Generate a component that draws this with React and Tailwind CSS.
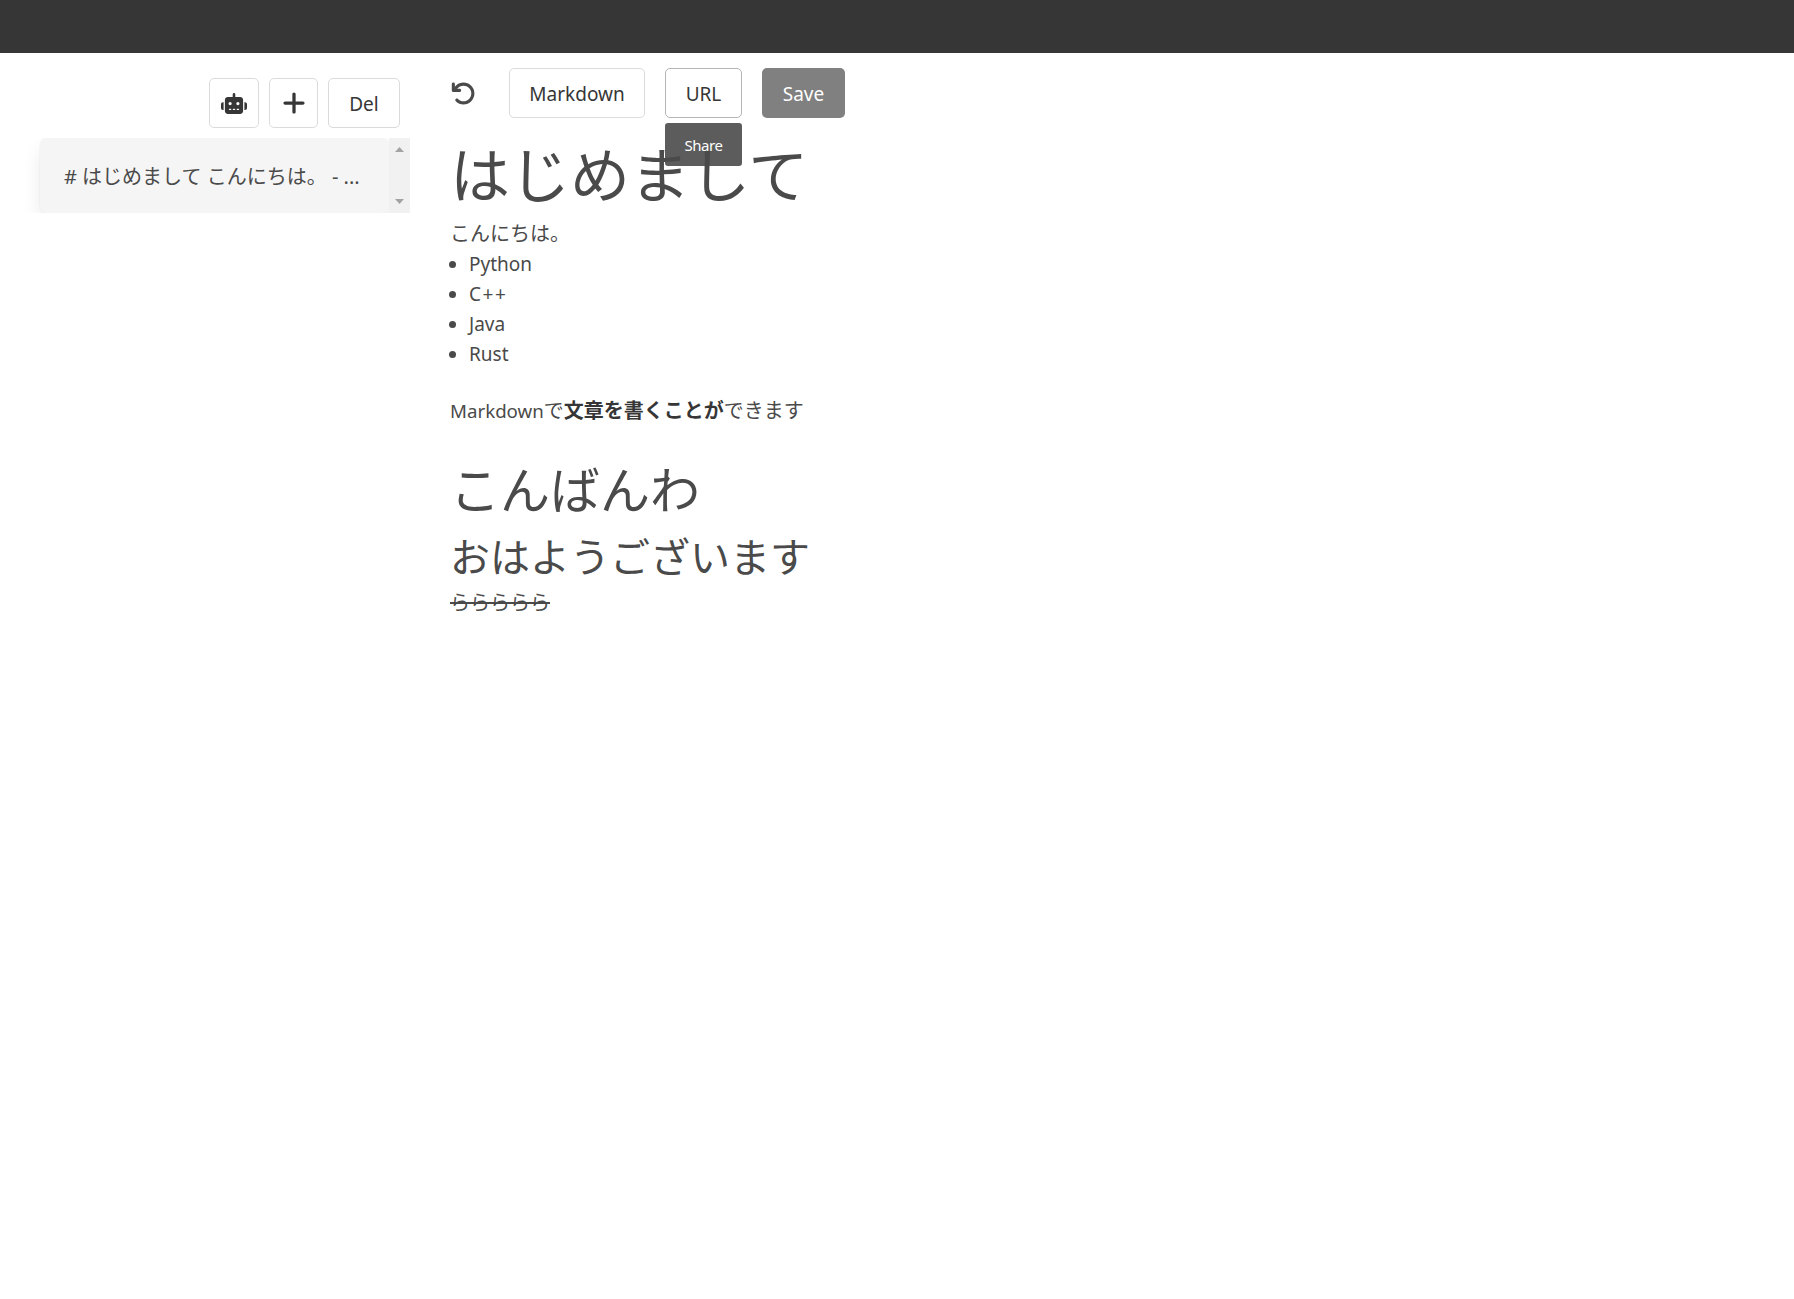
import React from 'react';
import { FaArrowRotateLeft, FaPlus, FaRobot } from 'react-icons/fa6';

const languages = ['Python', 'C++', 'Java', 'Rust'];

function Button({ className = '', children }) {
  return (
    <button
      className={`h-[50px] shrink-0 flex items-center justify-center rounded-[5px] border text-[19px] ${className}`}
    >
      {children}
    </button>
  );
}

function Sidebar() {
  return (
    <aside className="w-[410px] shrink-0 pt-[25px]">
      <div className="flex justify-end gap-[10px] pr-[10px]">
        <Button className="w-[50px] border-[#dbdbdb]">
          <FaRobot className="h-[21px] w-[26px]" />
        </Button>
        <Button className="w-[49px] border-[#dbdbdb]">
          <FaPlus size={26} />
        </Button>
        <Button className="w-[72px] border-[#dbdbdb] pt-[2px]">Del</Button>
      </div>

      <div className="mt-[10px] flex h-[75px] overflow-hidden">
        <div className="ml-[40px] w-[349px] rounded-[7px] bg-[#f5f5f5] pl-6 pr-[25px] shadow-[0_10px_20px_-2px_rgba(10,10,10,0.1),0_0_0_1px_rgba(10,10,10,0.02)]">
          <p className="truncate whitespace-pre text-[20px] leading-[78px] text-[#4a4a4a]">
            # はじめまして こんにちは。 - ...
          </p>
        </div>
        <div className="flex w-[21px] flex-col items-center justify-between bg-[#f1f1f1] py-[9px]">
          <svg width="9" height="5" viewBox="0 0 9 5" fill="#a3a3a3">
            <path d="M4.5 0L9 5H0z" />
          </svg>
          <svg width="9" height="5" viewBox="0 0 9 5" fill="#a3a3a3">
            <path d="M0 0h9L4.5 5z" />
          </svg>
        </div>
      </div>
    </aside>
  );
}

function Toolbar() {
  return (
    <div className="flex items-center">
      <button className="ml-px mr-[33px] text-[#4a4a4a]">
        <FaArrowRotateLeft size={25} />
      </button>
      <Button className="mr-5 w-[136px] border-[#dbdbdb] pt-[2px] text-[18.7px]">Markdown</Button>
      <div className="relative mr-5">
        <Button className="w-[77px] border-[#b5b5b5] pt-[2px]">URL</Button>
        <span className="absolute left-0 top-[55px] flex h-[43px] w-[77px] items-center justify-center rounded-[3px] bg-[#4a4a4a]/90 pt-[2px] text-[15px] tracking-[-0.5px] text-white">
          Share
        </span>
      </div>
      <Button className="w-[83px] border-transparent bg-[#808080] pt-[2px] text-white">Save</Button>
    </div>
  );
}

function Preview() {
  return (
    <article className="text-[20px] leading-[30px] text-[#4a4a4a]">
      <h1 className="mt-6 text-[60px] leading-[67px]">はじめまして</h1>
      <p className="mt-[10px]">こんにちは。</p>
      <ul className="-ml-px list-disc pl-5 text-[19px]">
        {languages.map((name) => (
          <li key={name} className={name === 'C++' ? 'tracking-[1.5px]' : ''}>
            {name}
          </li>
        ))}
      </ul>
      <p className="mt-[27px]">
        <span className="text-[18.7px]">Markdown</span>で
        <strong className="font-bold text-[#363636]">文章を書くことが</strong>できます
      </p>
      <h2 className="mt-[36px] text-[50px] leading-[56px]">こんばんわ</h2>
      <h3 className="mt-[16px] text-[40px] leading-[45px]">おはようございます</h3>
      <p className="mt-[9px]">
        <del>ららららら</del>
      </p>
    </article>
  );
}

export default function App() {
  return (
    <div className="min-h-screen bg-white font-['Noto_Sans','Noto_Sans_CJK_JP',sans-serif] text-[#363636]">
      <nav className="h-[53px] bg-[#363636]" />
      <div className="flex">
        <Sidebar />
        <main className="ml-[40px] pt-[15px]">
          <Toolbar />
          <Preview />
        </main>
      </div>
    </div>
  );
}
